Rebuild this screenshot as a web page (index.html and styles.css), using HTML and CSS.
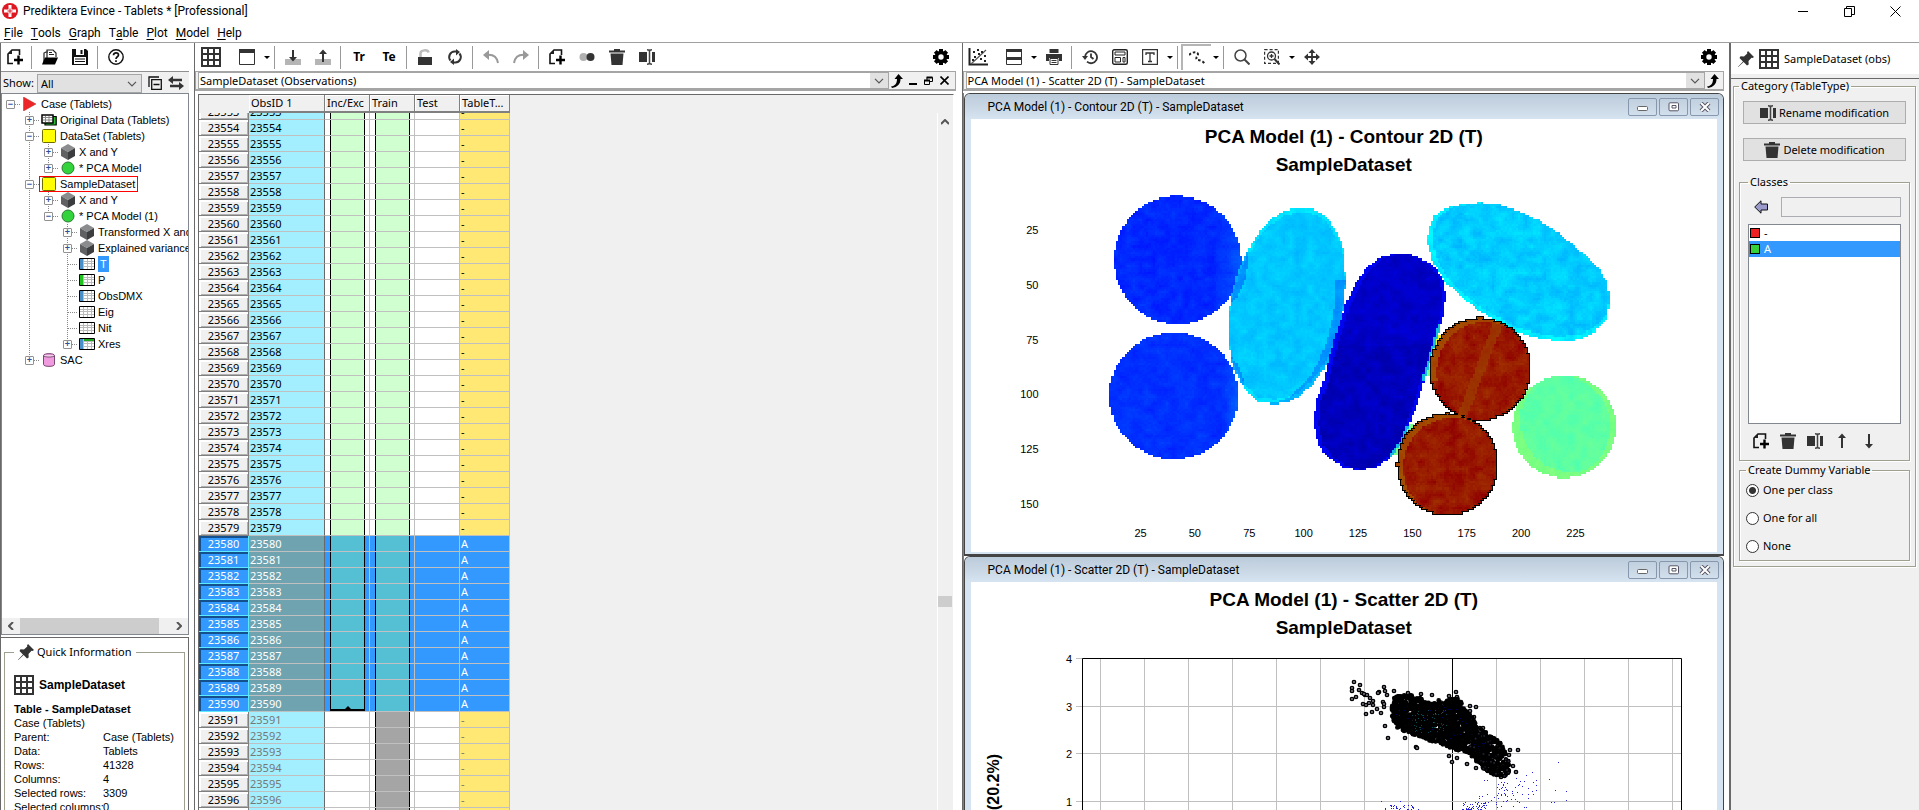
FILE: index.html
```html
<!DOCTYPE html>
<html lang="en">
<head>
<meta charset="utf-8">
<title>Prediktera Evince - Tablets * [Professional]</title>
<link rel="stylesheet" href="styles.css">
</head>
<body>
<svg class="defs" aria-hidden="true">
  <symbol id="grid" viewBox="0 0 20 20"><path fill="#fff" d="M0 0h20v20H0z"/><path fill="none" stroke="#333" stroke-width="2" d="M1 1h18v18H1zM7 1v18M13 1v18M1 7h18M1 13h18"/></symbol>
  <symbol id="doc" viewBox="0 0 16 16"><path fill="none" stroke="#111" stroke-width="1.6" d="M12.5 6V1H5L1 5v9.500h5"/><path fill="#222" d="M1 5 5 1v4z"/><path stroke="#000" stroke-width="2.400" d="M11.500 6.500v9M7 11h9"/></symbol>
  <symbol id="trash" viewBox="0 0 16 16"><path fill="#333" d="M5 0h6v1.500h5v2H0v-2h5zM1.500 4.500h13L13.500 16h-11z"/></symbol>
  <symbol id="rename" viewBox="0 0 16 16"><path fill="#333" d="M0 3h8v10H0zM13 3h3v10h-3z"/><path fill="none" stroke="#444" stroke-width="1.500" d="M8 .8c1.500 0 2.500.4 2.500 1.500C10.500 1.200 11.500.8 13 .8M10.500 2v12M8 15.200c1.500 0 2.500-.4 2.500-1.500 0 1.100 1 1.500 2.500 1.500"/></symbol>
  <symbol id="gear" viewBox="0 0 16 16"><circle cx="8" cy="8" r="4.500" fill="none" stroke="#000" stroke-width="3.600"/><path stroke="#000" stroke-width="4" d="M8 0v3M8 13v3M0 8h3M13 8h3M2.300 2.300l2 2M11.700 11.700l2 2M13.700 2.300l-2 2M4.300 11.700l-2 2"/></symbol>
  <symbol id="pin" viewBox="0 0 16 16"><path fill="#333" d="M10 0l6 6-1.500 1-1-.3-3 3.300.2 3.500-1.700 1L5.600 11 .3 16 0 15.700 5 10.400 1.500 7l1-1.700 3.500.2 3.300-3-.3-1z"/></symbol>
  <symbol id="jump" viewBox="0 0 12 14"><path fill="#000" d="M7.500 0 12 5H9.500c0 5-3 8-8.500 9l-1-1.500C4 12 6 9.500 6 5H3.500z"/></symbol>
  <symbol id="chev" viewBox="0 0 10 6"><path fill="none" stroke="#555" stroke-width="1.200" d="M1 .8l4 4 4-4"/></symbol>
  <symbol id="caret" viewBox="0 0 6 3"><path d="M0 0h6L3 3z"/></symbol>
  <symbol id="cube" viewBox="0 0 14 16"><path fill="#8a8c8e" d="M7 0l7 4-7 4-7-4z"/><path fill="#5f6163" d="M0 4l7 4v8l-7-4z"/><path fill="#3c3d3f" d="M14 4 7 8v8l7-4z"/></symbol>
  <symbol id="ball" viewBox="0 0 14 14"><circle cx="7" cy="7" r="6" fill="#33d33d" stroke="#2b7a30"/></symbol>
  <symbol id="set" viewBox="0 0 14 14"><rect x=".5" y=".5" width="13" height="13" rx="1" fill="#ff0" stroke="#6b6b00"/></symbol>
  <symbol id="tab" viewBox="0 0 16 12"><path fill="#fff" stroke="#000" d="M.5.500h15v11H.5z"/><path fill="none" stroke="#bbb" d="M1 3.500h14M1 5.500h14M1 8.500h14M4.500 1v10M8.500 1v10M12.500 1v10"/></symbol>
  <symbol id="winmin" viewBox="0 0 12 10"><rect x=".5" y="4.500" width="10" height="4" rx="1" fill="#fff" stroke="#666"/></symbol>
  <symbol id="winmax" viewBox="0 0 12 10"><rect x="1" y=".8" width="9.500" height="8" rx="1" fill="#fff" stroke="#556"/><path fill="none" stroke="#556" d="M4 3.500h4v2.500H4z"/></symbol>
  <symbol id="winx" viewBox="0 0 12 10"><path stroke="#556" stroke-width="4" d="M2 1l8 8M10 1 2 9"/><path stroke="#fff" stroke-width="2" d="M2 1l8 8M10 1 2 9"/></symbol>
</svg>

<header class="titlebar">
  <svg class="logo" viewBox="0 0 16 16"><circle cx="8" cy="8" r="8" fill="#dd1822"/><path stroke="#fff" stroke-width="3" d="M8 2v12M2 8h12"/><path stroke="#dd1822" stroke-width="1" d="M8 5.500v5M5.500 8h5"/></svg>
  <h1>Prediktera Evince - Tablets * [Professional]</h1>
  <div class="sys">
    <button aria-label="Minimize"><svg width="11" height="11" viewBox="0 0 11 11"><path stroke="#000" d="M0 5.500h10"/></svg></button>
    <button aria-label="Restore"><svg width="11" height="11" viewBox="0 0 11 11"><path fill="none" stroke="#000" d="M.5 2.500h7v8h-7zM2.500 2.500v-2h8v8h-3"/></svg></button>
    <button aria-label="Close"><svg width="11" height="11" viewBox="0 0 11 11"><path stroke="#000" d="M.5.5l10 10M10.500.5l-10 10"/></svg></button>
  </div>
</header>
<nav class="menu">
  <button><u>F</u>ile</button><button><u>T</u>ools</button><button><u>G</u>raph</button><button>T<u>a</u>ble</button><button><u>P</u>lot</button><button><u>M</u>odel</button><button><u>H</u>elp</button>
</nav>

<main class="app">
  <section class="side">
    <div class="bar">
      <button class="first" aria-label="New"><svg class="i16"><use href="#doc"/></svg></button><i></i>
      <button aria-label="Open"><svg class="i16" viewBox="0 0 16 16"><path fill="#fff" stroke="#222" stroke-width="1.200" d="M2 14V4l2-1h2M5 9V1h6l3 3v4M7 3.500h3M7 5.500h5"/><path fill="#000" d="M3 8.500h13L13 15.500H0z"/></svg></button>
      <button aria-label="Save"><svg class="i16" viewBox="0 0 16 16"><path fill="#111" d="M0 0h14l2 2v14H0z"/><path fill="#fff" d="M4 0h8v6H4zM2 8h12v7H2z"/><path fill="#111" d="M8.500 1h2v4h-2zM3 9.500h10v1H3zM3 12h10v1H3z"/></svg></button><i></i>
      <button aria-label="Help"><svg class="i16" viewBox="0 0 16 16"><circle cx="8" cy="8" r="7.200" fill="#fff" stroke="#111" stroke-width="1.400"/><path fill="none" stroke="#111" stroke-width="1.700" d="M5.500 6.200C5.500 3 10.500 3.200 10.500 6 10.500 7.800 8 7.800 8 10M8 11.300v1.700"/></svg></button>
    </div>
    <div class="show">
      <label for="show">Show:</label>
      <span class="combo grey"><select id="show"><option>All</option></select><svg><use href="#chev"/></svg></span>
      <button aria-label="Collapse all"><svg width="14" height="14" viewBox="0 0 14 14"><path fill="none" stroke="#111" stroke-width="1.300" d="M3.700 3.700h9.600v9.600H3.700zM1 11V1h10M5.500 8.500h6"/></svg></button>
      <button aria-label="Swap"><svg width="16" height="14" viewBox="0 0 16 14"><path fill="#333" d="M0 4l5-4v2.800h9v2.400H5V8zM16 10l-5-4v2.800H2v2.400h9V14z"/></svg></button>
    </div>
    <div class="treebox">
      <ul class="tree">
        <li><div class="row"><b class="ex">−</b><span class="dash"></span><span class="ic"><svg width="13" height="14" viewBox="0 0 13 14"><path fill="#ee2528" stroke="#a33" stroke-width=".5" d="M.5 0 13 7 .5 14z"/></svg></span>Case (Tablets)</div>
          <ul>
            <li><div class="row"><b class="ex">+</b><span class="dash"></span><span class="ic"><svg width="16" height="12" viewBox="0 0 16 12"><path fill="#2bbd35" stroke="#000" stroke-width="1.200" d="M4 2.500h11.200v8.500H4z"/><path fill="#fff" stroke="#000" stroke-width="1.500" d="M1 1h11v8H1z"/><path stroke="#888" d="M2 3.500h9M2 6h9M4.500 2v6M8 2v6"/></svg></span>Original Data (Tablets)</div></li>
            <li><div class="row"><b class="ex">−</b><span class="dash"></span><span class="ic"><svg width="14" height="14"><use href="#set"/></svg></span>DataSet (Tablets)</div>
              <ul>
                <li><div class="row"><b class="ex">+</b><span class="dash"></span><span class="ic"><svg width="14" height="16"><use href="#cube"/></svg></span>X and Y</div></li>
                <li><div class="row"><b class="ex">+</b><span class="dash"></span><span class="ic"><svg width="14" height="14"><use href="#ball"/></svg></span>* PCA Model</div></li>
              </ul></li>
            <li><div class="row"><b class="ex">−</b><span class="dash"></span><span class="mark"><span class="ic"><svg width="14" height="14"><use href="#set"/></svg></span>SampleDataset</span></div>
              <ul>
                <li><div class="row"><b class="ex">+</b><span class="dash"></span><span class="ic"><svg width="14" height="16"><use href="#cube"/></svg></span>X and Y</div></li>
                <li><div class="row"><b class="ex">−</b><span class="dash"></span><span class="ic"><svg width="14" height="14"><use href="#ball"/></svg></span>* PCA Model (1)</div>
                  <ul>
                    <li><div class="row"><b class="ex">+</b><span class="dash"></span><span class="ic"><svg width="14" height="16"><use href="#cube"/></svg></span>Transformed X and Y</div></li>
                    <li><div class="row"><b class="ex">+</b><span class="dash"></span><span class="ic"><svg width="14" height="16"><use href="#cube"/></svg></span>Explained variance</div></li>
                    <li><div class="row leaf"><span class="dash"></span><span class="ic"><svg width="16" height="12"><use href="#tab"/><path fill="#4a90c8" d="M1 1h3v10H1z"/></svg></span><span class="sel">T</span></div></li>
                    <li><div class="row leaf"><span class="dash"></span><span class="ic"><svg width="16" height="12"><use href="#tab"/><path fill="#1fc41f" d="M1 1h3v10H1z"/></svg></span>P</div></li>
                    <li><div class="row leaf"><span class="dash"></span><span class="ic"><svg width="16" height="12"><use href="#tab"/><path fill="#4a90c8" d="M1 1h3v10H1z"/></svg></span>ObsDMX</div></li>
                    <li><div class="row leaf"><span class="dash"></span><span class="ic"><svg width="16" height="12"><use href="#tab"/></svg></span>Eig</div></li>
                    <li><div class="row leaf"><span class="dash"></span><span class="ic"><svg width="16" height="12"><use href="#tab"/></svg></span>Nit</div></li>
                    <li><div class="row"><b class="ex">+</b><span class="dash"></span><span class="ic"><svg width="16" height="12"><use href="#tab"/><path fill="#4a90c8" d="M1 1h3v10H1z"/><path fill="#1fa41f" d="M5 1h10v2H5z"/></svg></span>Xres</div></li>
                  </ul></li>
              </ul></li>
            <li><div class="row"><b class="ex">+</b><span class="dash"></span><span class="ic"><svg width="12" height="14" viewBox="0 0 12 14"><path fill="#f09be0" stroke="#7a4a70" d="M.5 2.500C.5 0 11.500 0 11.500 2.500v9c0 2.500-11 2.500-11 0zM.5 2.500c0 2 11 2 11 0"/></svg></span>SAC</div></li>
          </ul></li>
      </ul>
      <div class="hscroll" aria-hidden="true"><svg viewBox="0 0 6 8"><path d="M5 0 1 4l4 4"/></svg><span></span><svg viewBox="0 0 6 8"><path d="M1 0l4 4-4 4"/></svg></div>
    </div>
    <div class="quick">
      <fieldset>
        <legend><svg class="i16"><use href="#pin"/></svg>Quick Information</legend>
        <h2><svg class="i20"><use href="#grid"/></svg>SampleDataset</h2>
        <p><strong>Table - SampleDataset</strong></p>
        <p>Case (Tablets)</p>
        <dl><dt>Parent:</dt><dd>Case (Tablets)</dd><dt>Data:</dt><dd>Tablets</dd><dt>Rows:</dt><dd>41328</dd><dt>Columns:</dt><dd>4</dd><dt>Selected rows:</dt><dd>3309</dd><dt>Selected columns:</dt><dd>0</dd></dl>
      </fieldset>
    </div>
  </section>

  <section class="pane">
    <div class="bar">
      <button class="wide" aria-label="Table"><svg class="i20"><use href="#grid"/></svg></button>
      <button aria-label="Window"><svg class="i16" viewBox="0 0 16 16"><path fill="#fff" stroke="#333" d="M.5 1.500h15v14H.5z"/><path fill="#333" d="M0 0h16v4H0z"/></svg></button><button class="dd" aria-label="Window options"><svg><use href="#caret"/></svg></button><i></i>
      <button aria-label="Import"><svg class="i16" viewBox="0 0 16 16"><path fill="#b5b5b5" d="M0 10h16v6H0z"/><path fill="#333" d="M7 1h2v7h3l-4 4.500L4 8h3z"/></svg></button>
      <button aria-label="Export"><svg class="i16" viewBox="0 0 16 16"><path fill="#b5b5b5" d="M0 10h16v6H0z"/><path fill="#333" d="M7 13h2V5h3L8 .5 4 5h3z"/></svg></button><i></i>
      <button>Tr</button><button>Te</button><i></i>
      <button aria-label="Unlock"><svg class="i16" viewBox="0 0 16 16"><path fill="none" stroke="#bbb" stroke-width="2.500" d="M3.500 9V4.500C3.500.5 11 .5 11.500 3.500"/><path fill="#333" d="M1 8h14v8H1z"/></svg></button>
      <button aria-label="Refresh"><svg class="i16" viewBox="0 0 16 16"><path fill="none" stroke="#333" stroke-width="2" d="M3.500 11.500A5.500 5.500 0 0 1 8 2.500h2M12.500 4.500A5.500 5.500 0 0 1 8 13.500H6"/><path fill="#333" d="M9 0l4 3-4 3.500zM7 9.500v6.500l-4-3z"/></svg></button><i></i>
      <button aria-label="Undo"><svg class="i16" viewBox="0 0 16 16"><path fill="none" stroke="#999" stroke-width="2" d="M3 6c7-1 11 2 12 8"/><path fill="#999" d="M0 6l6-5v10z"/></svg></button>
      <button aria-label="Redo"><svg class="i16" viewBox="0 0 16 16"><path fill="none" stroke="#999" stroke-width="2" d="M13 6C6 5 2 8 1 14"/><path fill="#999" d="M16 6l-6-5v10z"/></svg></button><i></i>
      <button aria-label="New column"><svg class="i16"><use href="#doc"/></svg></button>
      <button aria-label="Merge"><svg class="i16" viewBox="0 0 16 16"><circle cx="4.500" cy="8" r="4" fill="#b0b0b0"/><circle cx="11.500" cy="8" r="4" fill="#333"/></svg></button>
      <button aria-label="Delete"><svg class="i16"><use href="#trash"/></svg></button>
      <button aria-label="Rename"><svg class="i16"><use href="#rename"/></svg></button>
      <button class="end" aria-label="Settings"><svg class="i16"><use href="#gear"/></svg></button>
    </div>
    <div class="pick">
      <span class="combo"><select aria-label="Table view"><option>SampleDataset (Observations)</option></select><svg><use href="#chev"/></svg></span>
      <button aria-label="Detach"><svg width="12" height="14"><use href="#jump"/></svg></button>
      <button aria-label="Minimize"><svg width="8" height="10" viewBox="0 0 8 10"><path stroke="#000" stroke-width="2" d="M0 8h8"/></svg></button>
      <button aria-label="Restore"><svg width="9" height="10" viewBox="0 0 9 10"><path fill="none" stroke="#000" d="M.5 4.500h5v4h-5zM3 4V1.500h5.500v4H6"/><path stroke="#000" stroke-width="2" d="M2.500 1.500h6M0 4.500h6"/></svg></button>
      <button aria-label="Close"><svg width="9" height="9" viewBox="0 0 9 9"><path stroke="#000" stroke-width="1.600" d="M.5.5l8 8M8.500.5l-8 8"/></svg></button>
    </div>
    <div class="sheet">
      <div class="cells" id="cells">
        <table>
          <colgroup><col class="c-head"><col class="c-id"><col class="c-n"><col class="c-n"><col class="c-n"><col class="c-t"></colgroup>
          <thead><tr><td></td><th>ObsID 1</th><th>Inc/Exc</th><th>Train</th><th>Test</th><th>TableT...</th></tr></thead>
          <tbody id="rows"></tbody>
        </table>
      </div>
      <div class="vscroll" aria-hidden="true"><svg viewBox="0 0 8 6"><path d="M0 5l4-4 4 4"/></svg><span></span></div>
    </div>
  </section>

  <section class="pane plots">
    <div class="bar">
      <button class="wide" aria-label="Scatter"><svg class="i20" viewBox="0 0 20 20"><path fill="none" stroke="#222" stroke-width="2" d="M1.500 1v16.500H20"/><path stroke="#555" stroke-width="1.200" d="M3 17 18 3"/><path fill="#222" d="M5 4h2v2H5zM9 2h2v2H9zM13 4h2v2h-2zM6 9h2v2H6zM10 6h2v2h-2zM16 8h2v2h-2zM12 11h2v2h-2zM16 13h2v2h-2zM4 12h2v2H4z"/></svg></button>
      <button aria-label="Layout"><svg class="i16" viewBox="0 0 16 16"><path fill="#fff" stroke="#333" d="M.5.500h15v15H.5z"/><path fill="#333" d="M0 0h16v3H0zM0 8h16v3H0z"/></svg></button><button class="dd" aria-label="Layout options"><svg><use href="#caret"/></svg></button>
      <button aria-label="Print"><svg class="i16" viewBox="0 0 16 16"><path fill="#333" d="M3.500 0h9v4h-9zM0 5h16v7h-3V9H3v3H0z"/><path fill="#fff" stroke="#333" d="M4 9.500h8v6H4zM5.500 11.500h5M5.500 13.500h5"/></svg></button><i></i>
      <button aria-label="History"><svg class="i16" viewBox="0 0 16 16"><path fill="none" stroke="#333" stroke-width="1.800" d="M3 8a6 6 0 1 1 2 4.700M9 4.500V8l2.500 2"/><path fill="#333" d="M0 7h6l-3 4z"/></svg></button>
      <button aria-label="Template"><svg class="i16" viewBox="0 0 16 16"><rect x=".7" y=".7" width="14.600" height="14.600" rx="1.500" fill="#fff" stroke="#222" stroke-width="1.400"/><path fill="none" stroke="#222" d="M3 3h10v3H3zM3 8.500h5.500V13H3zM11 8.500h2V13h-2z"/></svg></button>
      <button aria-label="Text"><svg class="i16" viewBox="0 0 16 16"><path fill="#fff" stroke="#333" stroke-width="1.200" d="M.6.600h14.800v14.800H.6z"/><path fill="none" stroke="#333" stroke-width="1.300" d="M4 6V4h8v2M8 4v8.500M6 12.500h4"/></svg></button><button class="dd" aria-label="Text options"><svg><use href="#caret"/></svg></button><i></i>
      <button class="down" aria-label="Lasso"><svg class="i16" viewBox="0 0 16 16"><path fill="none" stroke="#222" stroke-width="2" stroke-dasharray="2.500 2" d="M0 5c3-3 8-4 9-1 0 3-3 3-1 6 3 0 7 1 8 5"/></svg></button><button class="dd" aria-label="Lasso options"><svg><use href="#caret"/></svg></button><i></i>
      <button aria-label="Zoom"><svg class="i16" viewBox="0 0 16 16"><circle cx="6.500" cy="6.500" r="5.500" fill="none" stroke="#444" stroke-width="1.500"/><path stroke="#444" stroke-width="2" d="M10.500 10.500l5 5"/></svg></button>
      <button aria-label="Zoom region"><svg class="i16" viewBox="0 0 16 16"><path fill="none" stroke="#333" stroke-width="1.200" stroke-dasharray="3 2" d="M.6.600h13.800v13.800H.6z"/><circle cx="7.500" cy="7" r="4" fill="none" stroke="#333" stroke-width="1.300"/><path stroke="#333" stroke-width="1.300" d="M5.500 7h4M7.500 5v4"/><path stroke="#333" stroke-width="2" d="M10.500 10l5 5.500"/></svg></button><button class="dd" aria-label="Zoom options"><svg><use href="#caret"/></svg></button>
      <button aria-label="Pan"><svg class="i16" viewBox="0 0 16 16"><path stroke="#333" stroke-width="1.800" d="M8 2v12M2 8h12"/><path fill="#333" d="M8 0l3.500 4h-7zM8 16l3.500-4h-7zM0 8l4-3.500v7zM16 8l-4-3.500v7z"/></svg></button>
      <button class="end" aria-label="Settings"><svg class="i16"><use href="#gear"/></svg></button>
    </div>
    <div class="pick">
      <span class="combo"><select aria-label="Plot view"><option>PCA Model (1) - Scatter 2D (T) - SampleDataset</option></select><svg><use href="#chev"/></svg></span>
      <button aria-label="Detach"><svg width="12" height="14"><use href="#jump"/></svg></button>
    </div>
    <div class="desk">
      <article class="win">
        <header><h2>PCA Model (1) - Contour 2D (T) - SampleDataset</h2><button aria-label="Minimize"><svg><use href="#winmin"/></svg></button><button aria-label="Maximize"><svg><use href="#winmax"/></svg></button><button aria-label="Close"><svg><use href="#winx"/></svg></button></header>
        <div class="plot">
          <h3>PCA Model (1) - Contour 2D (T)<br>SampleDataset</h3>
          <div class="contour">
            <ol class="ys"><li>25</li><li>50</li><li>75</li><li>100</li><li>125</li><li>150</li></ol>
            <canvas id="contour" width="560" height="340"></canvas>
            <ol class="xs"><li>25</li><li>50</li><li>75</li><li>100</li><li>125</li><li>150</li><li>175</li><li>200</li><li>225</li></ol>
          </div>
        </div>
      </article>
      <article class="win">
        <header><h2>PCA Model (1) - Scatter 2D (T) - SampleDataset</h2><button aria-label="Minimize"><svg><use href="#winmin"/></svg></button><button aria-label="Maximize"><svg><use href="#winmax"/></svg></button><button aria-label="Close"><svg><use href="#winx"/></svg></button></header>
        <div class="plot">
          <h3>PCA Model (1) - Scatter 2D (T)<br>SampleDataset</h3>
          <svg class="scatter" id="scatter" width="745" height="400" viewBox="0 0 745 400"></svg>
        </div>
      </article>
    </div>
  </section>

  <aside class="props">
    <header><svg class="i16"><use href="#pin"/></svg><svg class="i20"><use href="#grid"/></svg><h2>SampleDataset (obs)</h2></header>
    <fieldset class="outer"><legend>Category (TableType)</legend>
      <button class="push"><svg class="i16"><use href="#rename"/></svg>Rename modification</button>
      <button class="push"><svg class="i16"><use href="#trash"/></svg>Delete modification</button>
      <fieldset class="classes"><legend>Classes</legend>
        <div class="add"><button aria-label="Assign"><svg width="14" height="14" viewBox="0 0 14 14"><path fill="#99c" stroke="#111" d="M.7 7 7 .8V4h6.500v6H7v3.200z"/></svg></button><input type="text" aria-label="Class name"></div>
        <ul><li><i class="red"></i>-</li><li class="on"><i class="green"></i>A</li></ul>
        <div class="tools">
          <button aria-label="New class"><svg class="i16"><use href="#doc"/></svg></button>
          <button aria-label="Delete class"><svg class="i16"><use href="#trash"/></svg></button>
          <button aria-label="Rename class"><svg class="i16"><use href="#rename"/></svg></button>
          <button aria-label="Move up"><svg class="i16" viewBox="0 0 16 16"><path fill="#333" d="M7 15V5H4l4-4.500L12 5H9v10z"/></svg></button>
          <button aria-label="Move down"><svg class="i16" viewBox="0 0 16 16"><path fill="#333" d="M7 1v10H4l4 4.500 4-4.500H9V1z"/></svg></button>
        </div>
      </fieldset>
      <fieldset class="dummy"><legend>Create Dummy Variable</legend>
        <label><input type="radio" name="dummy" checked>One per class</label>
        <label><input type="radio" name="dummy">One for all</label>
        <label><input type="radio" name="dummy">None</label>
      </fieldset>
    </fieldset>
  </aside>
</main>
<script src="app.js"></script>
</body>
</html>
```
FILE: styles.css
```css
* { box-sizing: border-box; }
body { margin: 0; height: 100vh; display: flex; flex-direction: column; overflow: hidden; background: #fff; color: #000; font: 11px/16px "Noto Sans", sans-serif; }
button { border: 0; padding: 0; background: none; font: inherit; color: inherit; display: flex; align-items: center; justify-content: center; }
h1, h2, h3, p, ul, ol, dl, dd { margin: 0; padding: 0; font-weight: normal; font-size: inherit; list-style: none; }
fieldset { margin: 0; min-width: 0; border: 1px solid #a0a091; box-shadow: 1px 1px #fff, inset 1px 1px #fff; }
legend { padding: 0 2px; line-height: 14px; }
.defs { position: absolute; width: 0; height: 0; }
.i16 { width: 16px; height: 16px; flex: none; }
.i20 { width: 20px; height: 20px; flex: none; }

.titlebar { display: flex; align-items: center; height: 22px; padding-left: 2px; font-family: Roboto, sans-serif; }
.logo { width: 16px; height: 16px; margin-right: 5px; }
.titlebar h1 { flex: 1; font-size: 12px; }
.sys { display: flex; padding-right: 1px; }
.sys button { width: 46px; height: 20px; }
.menu { display: flex; gap: 8px; height: 21px; padding: 1px 4px 0; border-bottom: 1px solid #a0a0a0; font: 12px/20px Roboto, sans-serif; flex: none; }
.menu u { text-underline-offset: 2px; }

.app { flex: 1; min-height: 0; display: grid; grid-template-columns: 194px minmax(0, 1fr) minmax(0, 1fr) 190px; }
.bar { display: flex; align-items: center; height: 28px; flex: none; }
.bar button { width: 30px; height: 26px; font-weight: bold; font-size: 12px; }
.bar button.wide { margin-right: 6px; }
.bar button.dd { width: 10px; }
.dd svg { width: 6px; height: 3px; }
.bar button.end { margin-left: auto; }
.bar button.down { border: solid #b5b5b5; border-width: 2px 0 0 2px; }
.bar i { width: 1px; height: 23px; margin: 0 3px 0 2px; background: #999; }

.side { display: flex; flex-direction: column; min-height: 0; padding-right: 5px; border-left: 1px solid #696969; }
.side .bar button.first { width: 28px; }
.show { display: flex; align-items: center; gap: 6px; height: 22px; padding: 1px 5px 0 2px; border-top: 1px solid #909090; background: #f0f0f0; flex: none; }
.show label { width: 28px; }
.combo { display: grid; align-items: center; min-width: 0; border: 1px solid #a5a5a5; background: #fff; height: 17px; }
.combo select { grid-area: 1 / 1; width: 100%; min-width: 0; height: 15px; border: 0; padding: 0 20px 0 1px; background: transparent; font: inherit; line-height: 15px; appearance: none; color: #000; }
.combo svg { grid-area: 1 / 1; justify-self: end; width: 18px; height: 15px; padding: 5px 4px 4px; background: #e1e1e1; pointer-events: none; }
.combo.grey { flex: 1; height: 19px; background: #e1e1e1; }
.combo.grey select { padding-left: 3px; }
.treebox { flex: 1; min-height: 0; display: flex; flex-direction: column; border: 1px solid #828790; overflow: hidden; }
.tree { flex: 1; min-height: 0; overflow: hidden; padding: 2px 0 0 4px; font-family: "Liberation Sans", sans-serif; }
.tree ul { margin-left: 19px; }
.tree ul li { background: repeating-linear-gradient(#888 0 1px, transparent 1px 2px) 4px 0 / 1px 100% no-repeat; }
.tree ul li:last-child { background-size: 1px 8px; }
.row { display: flex; align-items: center; height: 16px; white-space: nowrap; }
.ex { flex: none; width: 9px; height: 9px; border: 1px solid #919191; border-radius: 1px; background: #fff; color: #2b4f9e; font: bold 9px/7px "Liberation Sans", sans-serif; text-align: center; }
.dash { flex: none; width: 5px; height: 1px; background: repeating-linear-gradient(90deg, #888 0 1px, transparent 1px 2px); }
.leaf .dash { width: 9px; margin-left: 5px; }
.ic { width: 19px; display: inline-flex; align-items: center; justify-content: center; margin-right: 2px; flex: none; }
.mark { display: flex; align-items: center; height: 16px; outline: 1px solid #f00; outline-offset: -1px; padding-right: 3px; }
.sel { background: #39f; color: #fff; padding: 0 2px; }
.hscroll { display: flex; align-items: center; justify-content: space-between; height: 16px; background: #f0f0f0; flex: none; }
.hscroll span { flex: 1; margin-right: 11px; height: 16px; background: #cdcdcd; }
.hscroll svg { width: 6px; height: 8px; margin: 0 6px; }
.hscroll path, .vscroll path { fill: none; stroke: #555; stroke-width: 2; }
.quick { flex: none; height: 173px; margin-top: 2px; padding: 4px 3px 0; border: solid #696969; border-width: 1px 1px 0 0; overflow: hidden; font-family: "Liberation Sans", sans-serif; line-height: 14px; }
.quick fieldset { height: 200px; padding: 13px 0 0 9px; }
.quick legend { display: flex; align-items: center; gap: 3px; height: 20px; padding: 0 5px 0 4px; font-family: "Noto Sans", sans-serif; }
.quick h2 { display: flex; align-items: center; gap: 5px; font-weight: bold; font-size: 12px; height: 20px; margin-bottom: 7px; }
.quick dl { display: grid; grid-template-columns: 89px 1fr; white-space: nowrap; }

.pane { display: flex; flex-direction: column; min-width: 0; min-height: 0; border-left: 1px solid #696969; padding-right: 6px; }
.pane .bar { padding-left: 1px; }
.pane.plots { padding-right: 5px; }
.plots .bar { padding-left: 0; }
.pick { display: flex; align-items: center; height: 20px; padding: 0 2px; border: 1px solid #a5a5a5; border-bottom-width: 2px; background: #f0f0f0; flex: none; }
.pick .combo { flex: 1; }
.pick button { width: 16px; height: 16px; }
.sheet { flex: 1; min-height: 0; display: flex; margin: 3px 2px 0 3px; border: 1px solid #696969; border-width: 1px 0 0 1px; border-right: 1px solid #fff; background: #f0f0f0; }
.cells { flex: 1; overflow: hidden; }
.cells table { border-collapse: separate; border-spacing: 0; table-layout: fixed; width: 311px; }
.c-head { width: 50px; } .c-id { width: 76px; } .c-n { width: 45px; } .c-t { width: 50px; }
.cells td, .cells th { height: 16px; padding: 0; font-weight: normal; text-align: left; line-height: 15px; white-space: nowrap; overflow: hidden; }
.cells thead td, .cells thead th { position: sticky; top: 0; height: 18px; background: #f0f0f0; z-index: 1; }
.cells thead th { border: solid #808080; border-width: 0 1px 2px 0; box-shadow: inset 1px 1px #fff; padding-left: 2px; line-height: 16px; }
.cells tbody th { text-align: center; background: #f0f0f0; border: solid #808080; border-width: 0 1px 1px 0; box-shadow: inset 2px 2px #fff, inset -1px -1px #b0b0b0; }
.cells tbody td { background: #fff; border: solid #c0c0c0; border-width: 0 1px 1px 0; padding-left: 1px; }
.cells tbody td.id { background: #a3eeff; border-right: 1px solid #696969; }
.cells tbody td.type { background: #ffe873; }
.cells tbody td.flag { padding: 0 4px 0 5px; }
.flag span { display: flex; align-items: flex-end; justify-content: center; height: 15px; border: solid #000; border-width: 0 1px; background: #d0ffd0; }
tr.on .flag span { background: #55c0d3; }
tr.off .train span { background: #a5a5a5; }
.cells tr.off td { color: #777; }
.cells tr.on td, .cells tr.on th { background: #39f; color: #fff; }
.cells tr.on td.id { background: #70a3b0; }
.cells tr.on th { border-color: #5ce8ff; box-shadow: inset 2px 2px #14508c; }
tr.last .inc span { border-bottom-width: 2px; }
tr.last .inc span::after { content: ""; border: 3px solid transparent; border-top: 0; border-bottom-color: #000; }
.vscroll { width: 16px; display: flex; flex-direction: column; align-items: center; margin-top: 18px; border-left: 1px solid #fff; }
.vscroll svg { width: 8px; height: 6px; margin: 6px 0; flex: none; }
.vscroll span { width: 14px; height: 11px; margin-top: 465px; background: #cdcdcd; }

.desk { flex: 1; min-height: 0; overflow: hidden; display: flex; flex-direction: column; margin-top: 2px; border-left: 1px solid #808080; }
.win { flex: none; border: 1px solid #444; border-radius: 6px 6px 0 0; padding: 0 6px 2px; background: #d6e3f0; border-bottom-width: 2px; }
.win header { display: flex; align-items: center; gap: 2px; height: 25px; margin: 0 -6px; padding: 0 4px 0 23px; border-radius: 5px 5px 0 0; background: linear-gradient(#bccbda, #d6e3f0); font-family: Roboto, sans-serif; font-size: 12px; }
.win header h2 { flex: 1; }
.win header button { width: 29px; height: 18px; border: 1px solid #8797ad; border-radius: 2px; }
.win header svg { width: 12px; height: 10px; }
.plot { background: #fff; }
.win:first-child .plot { height: 433px; }
.plot h3 { padding-top: 4px; font: bold 19px/28px "Liberation Sans", sans-serif; text-align: center; }
.contour { display: grid; grid-template-columns: 68px 560px 1fr; column-gap: 42px; grid-template-rows: 340px 16px; font-family: "Liberation Sans", sans-serif; padding-top: 1px; }
.ys { height: 290px; margin-top: 42px; display: flex; flex-direction: column; justify-content: space-between; text-align: right; }
.xs { grid-column: 2; width: 465px; margin-left: 45px; display: flex; justify-content: space-between; margin-top: 5px; }
.xs li { width: 30px; text-align: center; }
.scatter { display: block; margin: 0 auto; font: 11px "Liberation Sans", sans-serif; }
.scatter .axis { font: bold 16px "Liberation Sans", sans-serif; }

.props { border-left: 2px solid #696969; background: #f0f0f0; padding-right: 3px; min-width: 0; }
.props > header { display: flex; align-items: center; gap: 5px; height: 36px; margin-right: -3px; padding: 0 7px 4px; background: #fff; border-bottom: 1px solid #696969; box-shadow: inset 0 -4px #f0f0f0; }
.outer { margin: 0 0 0 2px; padding: 8px 5px 5px; display: flow-root; }
.push { width: calc(100% - 8px); height: 23px; margin: 0 4px 14px; gap: 3px; border: 1px solid #adadad; background: #e1e1e1; }
.classes { padding: 8px 8px 10px; margin-bottom: 2px; }
.add { display: flex; gap: 9px; align-items: center; margin-bottom: 7px; padding-left: 2px; }
.add button { width: 22px; }
.add input { flex: 1; min-width: 0; height: 20px; border: 1px solid #abadb3; background: #f0f0f0; }
.classes ul { height: 200px; border: 1px solid #828790; background: #fff; }
.classes li { display: flex; align-items: center; height: 16px; gap: 4px; padding-left: 1px; }
.classes li.on { background: #39f; color: #fff; }
.classes li i { width: 10px; height: 10px; border: 1px solid #000; }
.red { background: #ee2024; } .green { background: #35d13a; }
.tools { display: flex; gap: 1px; margin-top: 8px; }
.tools button { width: 26px; height: 18px; }
.dummy { padding: 4px 6px 5px; }
.dummy label { display: flex; align-items: center; gap: 4px; height: 18px; margin-bottom: 10px; }
.dummy label:last-child { margin-bottom: 0; }
.dummy input { appearance: none; width: 13px; height: 13px; margin: 0; border: 1px solid #333; border-radius: 50%; background: #fff; }
.dummy input:checked { background: radial-gradient(circle, #333 0 3px, #fff 4px); }
```
FILE: app.js
```js
let seed = 7;
const rnd = () => { seed = (seed * 1664525 + 1013904223) >>> 0; return seed / 4294967296; };

// Observation rows
const body = document.getElementById('rows');
let html = '';
for (let n = 23553; n <= 23600; n++) {
  const on = n >= 23580 && n <= 23590, off = n > 23590;
  const cls = on ? (n === 23590 ? 'on last' : 'on') : off ? 'off' : '';
  html += `<tr class="${cls}"><th>${n}</th><td class="id">${n}</td><td class="${off ? '' : 'flag inc'}">${off ? '' : '<span></span>'}</td><td class="flag train"><span></span></td><td></td><td class="type">${on ? 'A' : '-'}</td></tr>`;
}
body.innerHTML = html;
document.getElementById('cells').scrollTop = 9;

// Contour map
const ctx = document.getElementById('contour').getContext('2d');
const ellipse = (cx, cy, rx, ry) => (x, y) => ((x - cx) / rx) ** 2 + ((y - cy) / ry) ** 2 <= 1;
const poly = p => (x, y) => {
  let c = false;
  for (let i = 0, j = p.length - 1; i < p.length; j = i++) {
    const [a, b] = p[i], [d, e] = p[j];
    if (b > y !== e > y && x < (d - a) * (y - b) / (e - b) + a) c = !c;
  }
  return c;
};
const ovalA = poly([[615,82],[650,88],[680,104],[703,135],[725,175],[738,220],[741,300],[738,370],[728,430],[712,490],[690,550],[665,592],[640,622],[610,650],[575,668],[540,672],[495,665],[470,640],[445,605],[425,560],[415,500],[413,440],[415,390],[424,335],[442,265],[465,215],[500,155],[530,120],[570,92]]);
const capsule = poly([[890,219],[940,228],[985,255],[1012,292],[1022,340],[1018,395],[1003,450],[985,520],[965,590],[945,660],[925,720],[905,780],[870,830],[830,860],[785,870],[735,862],[690,830],[665,795],[652,735],[656,670],[680,600],[695,530],[715,460],[740,375],[770,310],[795,270],[830,235]]);
const ovalB = poly([[1110,68],[1160,70],[1220,90],[1290,125],[1350,170],[1400,215],[1450,265],[1475,310],[1480,370],[1470,420],[1440,455],[1395,480],[1330,483],[1270,472],[1215,455],[1160,420],[1110,390],[1060,345],[1020,305],[985,245],[970,190],[972,150],[990,105],[1030,80]]);
const c1 = ellipse(270, 240, 178, 192), c2 = ellipse(260, 647, 181, 190);
const r1 = ellipse(1118, 567, 139, 152), r2 = ellipse(1026, 853, 140, 150), g1 = ellipse(1353, 740, 145, 154);
const red = (x, y) => r1(x, y) || r2(x, y);
// Shapes are traced at 2.8 x 3 units per pixel; cells are 2.18px squares.
const SX = 2.8, SY = 3, W = 250, H = 158, cw = 6.09, ch = 6.54;
const coarse = [];
for (let i = 0; i < 5400; i++) coarse.push(rnd() - .5);
const smooth = (i, j) => {
  const x = i / 3, y = j / 3, a = x | 0, b = y | 0, u = x - a, v = y - b, f = (p, q) => coarse[q * 90 + p];
  return (f(a, b) * (1 - u) + f(a + 1, b) * u) * (1 - v) + (f(a, b + 1) * (1 - u) + f(a + 1, b + 1) * u) * v;
};
const mask = [];
for (let j = 0; j < H; j++) for (let i = 0; i < W; i++) {
  const x = (i + .5) * cw, y = (j + .5) * ch, n = smooth(i, j) + (rnd() - .5) * .35;
  let c = null;
  if (c1(x, y)) c = [0, 40 + n * 30 + Math.max(0, x - 370) * .5, 255];
  else if (c2(x, y)) c = [0, 48 + n * 28 + Math.max(0, x - 395) * .9, 255];
  if (ovalA(x, y)) {
    c = [0, 200 + n * 28, 255];
    if (c1(x - 20, y) || c2(x - 20, y)) c[1] -= 60;
    if (!ovalA(x + 26, y) && y > 300) c[1] -= 50;
    if (!ovalA(x, y - 14) || !ovalA(x, y + 14)) c[1] += 30;
  }
  if (ovalB(x, y)) {
    c = [0, 205 + n * 40, 255];
    if (!ovalB(x - 14, y) || !ovalB(x, y + 14)) c[1] += 35;
  }
  if (capsule(x, y)) {
    c = [0, 0, 200 + n * 36 - (y > 500 ? 12 : 0)];
    if (!capsule(x - 14, y) || !capsule(x + 10, y)) c = [0, 5, 240];
    if (!capsule(x + 8, y) && y > 430 && y < 600) c = [20, 190, 220];
    if (!capsule(x + 10, y) && y > 740 && y < 830) c = [20, 180, 230];
  } else if (capsule(x - 12, y) && ((y > 465 && y < 590) || (y > 735 && y < 825))) {
    c = y > 560 || y > 790 ? [120, 255, 140] : [235, 245, 40];
  }
  if (g1(x, y)) {
    c = [92 + n * 26, 255, 165 - n * 20];
    if (!g1(x - 22, y + 18) || !g1(x + 16, y)) c = [120 + n * 26, 255, 130];
  }
  const isRed = red(x, y);
  if (isRed) {
    c = [152 + n * 14, 24 + n * 42, 0];
    if (r1(x, y) && Math.abs(x - (1160 - (y - 450) * .36)) < 14) c = [155, 50 + n * 20, 0];
    if (!red(x - 16, y - 10) && !(y > 600 && y < 690)) c = [162, 72 + n * 20, 0];
  }
  mask.push(isRed);
  if (!c) continue;
  ctx.fillStyle = `rgb(${c.map(v => Math.max(0, Math.min(255, v | 0))).join()})`;
  const px = Math.round(i * cw / SX), py = Math.round(j * ch / SY);
  ctx.fillRect(px, py, Math.round((i + 1) * cw / SX) - px, Math.round((j + 1) * ch / SY) - py);
}
ctx.fillStyle = '#000';
for (let j = 0; j < H; j++) for (let i = 0; i < W; i++) {
  if (!mask[j * W + i]) continue;
  const x = Math.round(i * cw / SX), y = Math.round(j * ch / SY), x2 = Math.round((i + 1) * cw / SX), y2 = Math.round((j + 1) * ch / SY);
  if (!mask[j * W + i - 1]) ctx.fillRect(x - 1, y, 1, y2 - y);
  if (!mask[j * W + i + 1]) ctx.fillRect(x2, y, 1, y2 - y);
  if (!mask[(j - 1) * W + i]) ctx.fillRect(x - 1, y - 1, x2 - x + 2, 1);
  if (!mask[(j + 1) * W + i]) ctx.fillRect(x - 1, y2, x2 - x + 2, 1);
}

// Scatter plot
const X = 971, Y = 642;
let s = '';
for (let k = 0; k < 14; k++) s += `<path stroke="${k === 8 ? '#000' : '#c0c0c0'}" d="M${129.5 + 44 * k} 16v400"/>`;
[['4', 16], ['3', 64], ['2', 111], ['1', 159], ['0', 207]].forEach(([t, y]) => {
  s += `<path stroke="#c0c0c0" d="M105 ${y + .5}h605"/><text x="101" y="${y + 5}" text-anchor="end">${t}</text>`;
});
s += '<path fill="none" stroke="#000" d="M111.500 400V16.500h599V400"/>';
s += '<text class="axis" transform="translate(28 112) rotate(-90)" text-anchor="end">t[2] (20.2%)</text>';
const dot = (x, y, fill = '#778') => { s += `<circle cx="${(x - X).toFixed(1)}" cy="${(y - Y).toFixed(1)}" r="1.700" fill="${fill}" stroke="#000" stroke-width="1.300"/>`; };
const inCloud = poly([[1392,699],[1398,696],[1408,694],[1418,697],[1426,701],[1446,700],[1452,698],[1460,699],[1463,708],[1472,716],[1477,726],[1490,735],[1500,740],[1506,755],[1512,770],[1504,777],[1488,773],[1480,766],[1468,753],[1446,747],[1420,737],[1398,729],[1391,717]]);
[[1354,682],[1360,685],[1352,688],[1359,690],[1352,691],[1356,697],[1352,699],[1362,693],[1365,695],[1364,694],[1367,695],[1363,704],[1366,705],[1369,703],[1373,701],[1373,705],[1377,709],[1370,698],[1366,714],[1372,712],[1381,713],[1379,692],[1384,687],[1385,691],[1378,693],[1383,702],[1384,707],[1384,704],[1387,695],[1394,691],[1385,726],[1388,738],[1405,738],[1416,747],[1417,748],[1408,693],[1421,694],[1420,698],[1432,695],[1449,696],[1456,692],[1457,697],[1470,706],[1476,707],[1470,711],[1474,717],[1483,728],[1449,756],[1452,762],[1457,758],[1458,750],[1467,764],[1476,768],[1510,750],[1518,750],[1509,755],[1513,766],[1516,772],[1501,777]].forEach(p => dot(...p));
for (let k = 0; k < 3200; k++) {
  const x = 1386 + rnd() * 132, y = 690 + rnd() * 90;
  if (inCloud(x, y)) dot(x, y, x < 1470 || rnd() < .75 ? '#000' : '#223');
}
for (let k = 0; k < 50; k++) s += `<rect x="${Math.round(1412 + rnd() * 34) - X}" y="${Math.round(710 + rnd() * 22) - Y}" width="1" height="1" fill="#064a50"/>`;
for (let k = 0; k < 90; k++) {
  const x = Math.round(1394 + rnd() * 100), y = Math.round(702 + rnd() * 50);
  if (inCloud(x - 4, y + 3) && inCloud(x + 4, y - 3)) s += `<rect x="${x - X}" y="${y - Y}" width="1" height="1" fill="#005"/>`;
}
const speck = (x, y) => { s += `<rect x="${Math.round(x - X)}" y="${Math.round(y - Y)}" width="1" height="1" fill="#22d"/>`; };
for (let k = 0; k < 45; k++) speck(1462 + rnd() * 26, 802 + rnd() * 8);
for (let k = 0; k < 14; k++) speck(1474 + rnd() * 24, 792 + rnd() * 14);
for (let k = 0; k < 34; k++) speck(1384 + rnd() * 34, 805 + rnd() * 5);
for (let k = 0; k < 16; k++) speck(1500 + rnd() * 8, 781 + rnd() * 16);
for (let k = 0; k < 42; k++) speck(1495 + rnd() * 45, 780 + rnd() * 28);
[[1558,762],[1549,779],[1555,790],[1566,791],[1566,800],[1532,772],[1526,775],[1516,778],[1484,780],[1487,780],[1551,802],[1554,802],[1381,801],[1400,801]].forEach(p => speck(...p));
document.getElementById('scatter').innerHTML = s;
```
